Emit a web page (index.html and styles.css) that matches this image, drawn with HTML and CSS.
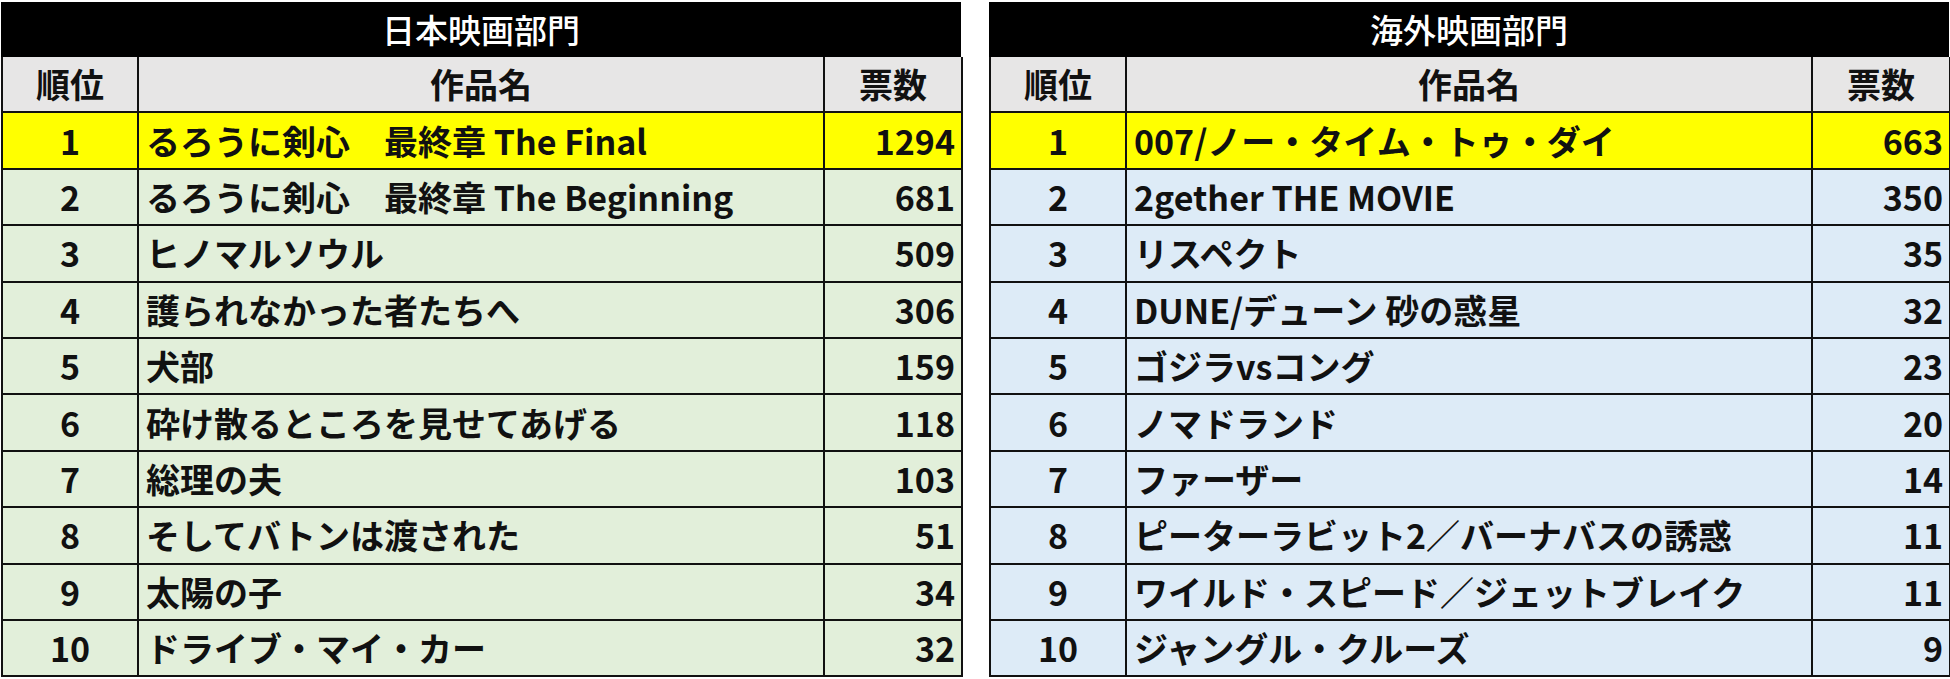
FILE: index.html
```html
<!DOCTYPE html>
<html lang="ja">
<head>
<meta charset="utf-8">
<link rel="stylesheet" href="styles.css">
</head>
<body>
<div class="page">
  <section class="board">
    <div class="title">日本映画部門</div>
    <table class="rank jp">
      <colgroup><col class="c-rank"><col class="c-name"><col class="c-votes"></colgroup>
      <tr class="head"><td class="r">順位</td><td class="hn">作品名</td><td class="hv">票数</td></tr>
      <tr class="top"><td class="r">1</td><td class="n">るろうに剣心　最終章 The Final</td><td class="v">1294</td></tr>
      <tr><td class="r">2</td><td class="n">るろうに剣心　最終章 The Beginning</td><td class="v">681</td></tr>
      <tr><td class="r">3</td><td class="n">ヒノマルソウル</td><td class="v">509</td></tr>
      <tr><td class="r">4</td><td class="n">護られなかった者たちへ</td><td class="v">306</td></tr>
      <tr><td class="r">5</td><td class="n">犬部</td><td class="v">159</td></tr>
      <tr><td class="r">6</td><td class="n">砕け散るところを見せてあげる</td><td class="v">118</td></tr>
      <tr><td class="r">7</td><td class="n">総理の夫</td><td class="v">103</td></tr>
      <tr><td class="r">8</td><td class="n">そしてバトンは渡された</td><td class="v">51</td></tr>
      <tr><td class="r">9</td><td class="n">太陽の子</td><td class="v">34</td></tr>
      <tr><td class="r">10</td><td class="n">ドライブ・マイ・カー</td><td class="v">32</td></tr>
    </table>
  </section>
  <section class="board">
    <div class="title">海外映画部門</div>
    <table class="rank fx">
      <colgroup><col class="c-rank"><col class="c-name"><col class="c-votes"></colgroup>
      <tr class="head"><td class="r">順位</td><td class="hn">作品名</td><td class="hv">票数</td></tr>
      <tr class="top"><td class="r">1</td><td class="n">007/ノー・タイム・トゥ・ダイ</td><td class="v">663</td></tr>
      <tr><td class="r">2</td><td class="n">2gether THE MOVIE</td><td class="v">350</td></tr>
      <tr><td class="r">3</td><td class="n">リスペクト</td><td class="v">35</td></tr>
      <tr><td class="r">4</td><td class="n">DUNE/デューン 砂の惑星</td><td class="v">32</td></tr>
      <tr><td class="r">5</td><td class="n">ゴジラvsコング</td><td class="v">23</td></tr>
      <tr><td class="r">6</td><td class="n">ノマドランド</td><td class="v">20</td></tr>
      <tr><td class="r">7</td><td class="n">ファーザー</td><td class="v">14</td></tr>
      <tr><td class="r">8</td><td class="n">ピーターラビット2／バーナバスの誘惑</td><td class="v">11</td></tr>
      <tr><td class="r">9</td><td class="n">ワイルド・スピード／ジェットブレイク</td><td class="v">11</td></tr>
      <tr><td class="r">10</td><td class="n">ジャングル・クルーズ</td><td class="v">9</td></tr>
    </table>
  </section>
</div>
</body>
</html>
```

FILE: styles.css
```css
html, body {
  margin: 0;
  padding: 0;
  background: #ffffff;
}
.page {
  display: flex;
  gap: 28px;
  padding: 2px 0 0 1px;
  font-family: "Noto Sans CJK JP", "Noto Sans", sans-serif;
  font-weight: 700;
  color: #111;
}
.board {
  width: 960px;
  display: flex;
  flex-direction: column;
}
.title {
  height: 55px;
  background: #000;
  color: #fff;
  font-size: 33px;
  font-weight: 500;
  display: flex;
  align-items: center;
  justify-content: center;
  line-height: 1;
}
.rank {
  border-collapse: collapse;
  width: 960px;
  table-layout: fixed;
}
.c-rank { width: 136px; }
.c-name { width: 686px; }
.c-votes { width: 138px; }
.rank td {
  border: 2px solid #111;
  height: 54.4px;
  padding: 0;
  font-size: 34px;
  line-height: 1;
  white-space: nowrap;
  vertical-align: middle;
}
.rank tr.head td {
  background: #e7e6e6;
  border-top: none;
}
.jp td { background: #e2efda; }
.fx td { background: #ddebf7; }
.rank tr.top td { background: #ffff00; }
.r, .hn, .hv { text-align: center; }
.n { text-align: left; padding-left: 7px !important; }
.v { text-align: right; padding-right: 6px !important; }
```
